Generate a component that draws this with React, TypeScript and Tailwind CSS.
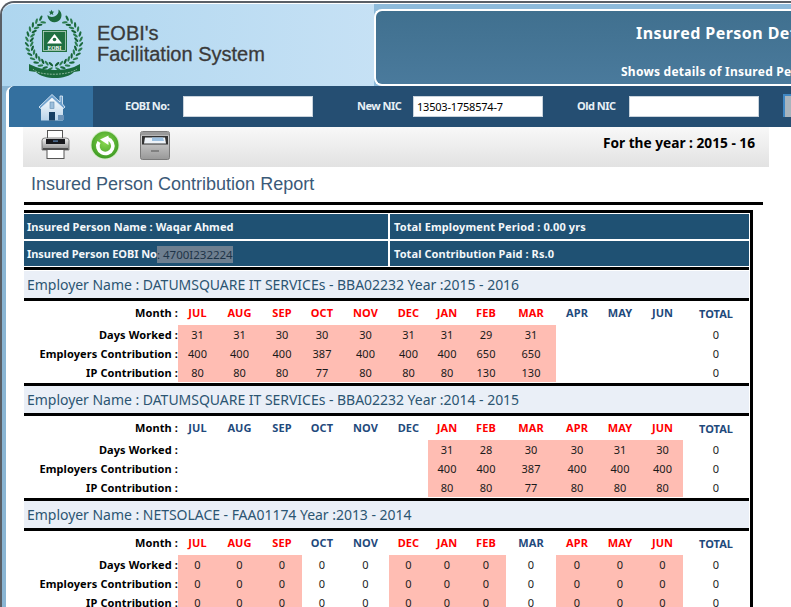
import React from "react";

const MONTHS = ["JUL","AUG","SEP","OCT","NOV","DEC","JAN","FEB","MAR","APR","MAY","JUN"];
const GRID = "grid grid-cols-[154px_39px_45px_40px_40px_47px_39px_38px_40px_50px_42px_44px_41px_66px]";

type Sec = { title: string; on: boolean[]; days: string[]; emp: string[]; ip: string[] };
const e = "";
const SECTIONS: Sec[] = [
  {
    title: "Employer Name : DATUMSQUARE IT SERVICEs - BBA02232 Year :2015 - 2016",
    on: [1,1,1,1,1,1,1,1,1,0,0,0].map(Boolean),
    days: ["31","31","30","30","30","31","31","29","31",e,e,e],
    emp: ["400","400","400","387","400","400","400","650","650",e,e,e],
    ip: ["80","80","80","77","80","80","80","130","130",e,e,e],
  },
  {
    title: "Employer Name : DATUMSQUARE IT SERVICEs - BBA02232 Year :2014 - 2015",
    on: [0,0,0,0,0,0,1,1,1,1,1,1].map(Boolean),
    days: [e,e,e,e,e,e,"31","28","30","30","31","30"],
    emp: [e,e,e,e,e,e,"400","400","387","400","400","400"],
    ip: [e,e,e,e,e,e,"80","80","77","80","80","80"],
  },
  {
    title: "Employer Name : NETSOLACE - FAA01174 Year :2013 - 2014",
    on: [1,1,1,0,0,1,1,1,0,1,1,1].map(Boolean),
    days: Array(12).fill("0"),
    emp: Array(12).fill("0"),
    ip: Array(12).fill("0"),
  },
];

function Emblem() {
  const leaves: React.ReactNode[] = [];
  const cx = 30;
  const cy = 33;
  for (let side = -1; side <= 1; side += 2) {
    for (let i = 0; i < 14; i++) {
      const deg = 82 - i * 11;
      const a = (deg * Math.PI) / 180;
      for (const [dr, tilt, fill] of [
        [3.2, 35, i % 2 ? "#1b6a3e" : "#2c7d50"],
        [-1.6, -35, i % 2 ? "#2c7d50" : "#145f34"],
      ] as [number, number, string][]) {
        const x = cx + side * (24 + dr) * Math.cos(a);
        const y = cy + (24 + dr) * Math.sin(a);
        const rot = side * (deg + 90 + tilt);
        leaves.push(
          <ellipse key={`${side}-${i}-${dr}`} cx={x} cy={y} rx={2.9} ry={1.15} fill={fill} transform={`rotate(${rot} ${x} ${y})`} />
        );
      }
      if (i % 2 === 0) {
        const x = cx + side * 25 * Math.cos(a);
        const y = cy + 25 * Math.sin(a);
        leaves.push(<circle key={`c${side}-${i}`} cx={x} cy={y} r={0.7} fill="#a8cdb6" />);
      }
    }
  }
  return (
    <svg width="62" height="74" viewBox="0 0 62 74" className="shrink-0">
      <path d="M23.500 6A7 7 0 1 0 34.500 0.500A6.500 6.500 0 0 1 23.500 6z" fill="#1c6b3f" />
      <path d="M27.500 0.800l0.800 1.800 2 0.200-1.500 1.300 0.500 2-1.800-1-1.800 1 0.500-2-1.500-1.300 2-0.200z" fill="#1c6b3f" />
      {leaves}
      <rect x="18" y="21" width="25" height="22" fill="#1f6f41" />
      <rect x="19.500" y="22.500" width="22" height="19" fill="none" stroke="#cfe3d6" strokeWidth="0.7" />
      <path d="M30.500 25L38 34.500H23z" fill="#fff" />
      <circle cx="30.500" cy="30.500" r="1.800" fill="#1f6f41" />
      <text x="30.500" y="40.500" textAnchor="middle" fontSize="5.500" fontWeight="700" fill="#fff" fontFamily="Liberation Serif, serif">EOBI</text>
      <path d="M5 55l7 3c10 4 28 4 38 0l6-3v7l-6 1c-8 8-30 8-38 0l-7-1z" fill="#1a6a3d" />
      <path d="M9 60c4 7 36 7 44 0" stroke="#b9d6c4" strokeWidth="0.7" fill="none" strokeDasharray="2 1" />
    </svg>
  );
}

function HomeIcon() {
  return (
    <svg width="28" height="30" viewBox="0 0 28 30">
      <defs>
        <linearGradient id="hw" x1="0" y1="0" x2="0" y2="1">
          <stop offset="0" stopColor="#ffffff" />
          <stop offset="1" stopColor="#b9d4ea" />
        </linearGradient>
      </defs>
      <path d="M3 14v14.500h22V14L14 4z" fill="url(#hw)" />
      <path d="M1 15L14 2.500 22 10V4h2.500v8L27 15l-1.500 1.500L14 6 2.500 16.500z" fill="#6ea0cc" stroke="#eaf3fb" strokeWidth="0.8" />
      <rect x="12" y="10" width="4" height="6.500" fill="#9dbfdc" stroke="#5f89ad" strokeWidth="0.6" />
      <rect x="11" y="20" width="6" height="8.500" fill="#173f63" />
      <rect x="20" y="23" width="6" height="5" fill="#6c93b8" />
    </svg>
  );
}

function PrinterIcon() {
  return (
    <svg width="29" height="29" viewBox="0 0 29 29">
      <defs>
        <linearGradient id="pb" x1="0" y1="0" x2="0" y2="1">
          <stop offset="0" stopColor="#f4f4f4" />
          <stop offset="1" stopColor="#8c8c8c" />
        </linearGradient>
      </defs>
      <rect x="6.500" y="0.500" width="15" height="8" fill="#fdfdfd" stroke="#555" />
      <path d="M1 10.500Q1 8 4 8h21q3 0 3 2.500V20H1z" fill="url(#pb)" stroke="#555" strokeWidth="0.7" />
      <rect x="5" y="9" width="19" height="5" fill="#17181c" />
      <rect x="12" y="10.500" width="5" height="1.200" fill="#5f87b5" />
      <rect x="6" y="19" width="17" height="9.500" fill="#fff" stroke="#555" />
      <rect x="2" y="18" width="25" height="2" fill="#4d4d4d" />
    </svg>
  );
}

function RefreshIcon() {
  return (
    <svg width="30" height="30" viewBox="0 0 30 30">
      <defs>
        <radialGradient id="rg" cx="0.500" cy="0.400" r="0.650">
          <stop offset="0" stopColor="#8ad84f" />
          <stop offset="1" stopColor="#37951f" />
        </radialGradient>
      </defs>
      <circle cx="15" cy="15" r="14.500" fill="#d6ecc9" />
      <circle cx="15" cy="15" r="13.500" fill="url(#rg)" />
      <path d="M17.500 8.800A7.500 7.500 0 1 1 9 12" fill="none" stroke="#fff" strokeWidth="3.600" />
      <path d="M18.500 5.500v9.500L10 9.500z" fill="#fff" />
    </svg>
  );
}

function ScannerIcon() {
  return (
    <svg width="30" height="29" viewBox="0 0 30 29">
      <defs>
        <linearGradient id="sb" x1="0" y1="0" x2="0" y2="1">
          <stop offset="0" stopColor="#e2e2e2" />
          <stop offset="1" stopColor="#989898" />
        </linearGradient>
      </defs>
      <rect x="0.500" y="0.500" width="29" height="28" rx="2" fill="url(#sb)" stroke="#7a7a7a" />
      <rect x="1" y="1" width="28" height="3.500" fill="#9a9a9a" />
      <rect x="2" y="5" width="26" height="8.500" fill="#333" />
      <path d="M5 6.500h20l1 6H4z" fill="#eef3f8" />
      <path d="M12 6.500h11l1 3.500H12z" fill="#9cc0e0" />
      <rect x="11" y="19" width="8" height="2" fill="#808080" />
    </svg>
  );
}

function Cell({ children, on }: { children?: React.ReactNode; on?: boolean }) {
  return <div className={`flex items-center justify-center text-[#1a1a1a] ${on ? "bg-[#ffbdb3]" : "bg-white"}`}>{children}</div>;
}

function DataRow({ label, vals, on }: { label: string; vals: string[]; on: boolean[] }) {
  return (
    <div className={`${GRID} h-[19px] text-[11px] leading-[19px]`}>
      <div className="text-right font-bold tracking-[0.1px] text-black">{label}</div>
      {vals.map((v, i) => (
        <Cell key={i} on={on[i]}>{v}</Cell>
      ))}
      <Cell>0</Cell>
    </div>
  );
}

function Section({ s, divider }: { s: Sec; divider: boolean }) {
  return (
    <section className={divider ? "border-b-[3px] border-black" : ""}>
      <div className="flex h-[27px] items-center bg-[#eaeff7] pl-[3px] text-[14px] tracking-[-0.03px] text-[#2c5572]">{s.title}</div>
      <div className="h-[3px] bg-black" />
      <div className={`${GRID} h-[24px] items-center text-[11px] font-bold`}>
        <div className="text-right tracking-[0.1px] text-black">Month :</div>
        {MONTHS.map((m, i) => (
          <div key={m} className={`text-center tracking-[0.1px] ${s.on[i] ? "text-[#ff0000]" : "text-[#1f4a7c]"}`}>{m}</div>
        ))}
        <div className="pt-[2px] text-center text-[#1f4a7c]">TOTAL</div>
      </div>
      <DataRow label="Days Worked :" vals={s.days} on={s.on} />
      <DataRow label="Employers Contribution :" vals={s.emp} on={s.on} />
      <DataRow label="IP Contribution :" vals={s.ip} on={s.on} />
      <div className="h-px" />
    </section>
  );
}

export default function App() {
  return (
    <div className="h-[607px] w-[791px] overflow-hidden bg-white pt-px font-['Noto_Sans',sans-serif]">
      <div className="h-[620px] rounded-tl-[14px] border-t-2 border-l-2 border-[#5a5f66] bg-[#8ab5d3]">
        <header className="flex h-[83px] rounded-tl-[12px] border-t border-white bg-gradient-to-r from-[#aed6ef] to-[#e0edfb]">
          <div className="flex w-[372px] shrink-0 items-start pt-[5px] pl-[22px]">
            <Emblem />
            <div className="ml-[11px] mt-[14px] font-['Liberation_Sans',sans-serif] text-[20px] leading-[21px] text-[#3a3a3a] [-webkit-text-stroke:0.3px_#3a3a3a]">
              <div>EOBI's</div>
              <div>Facilitation System</div>
            </div>
          </div>
          <div className="flex-1 bg-[#8ebbdb] pt-[5px]">
            <div className="h-[77px] overflow-hidden rounded-l-[8px] border-2 border-r-0 border-white bg-gradient-to-b from-[#40708f] to-[#4a7a9c] font-bold text-white">
              <div className="ml-[260px] w-[300px] pt-[12px] text-[16px] leading-[20px] tracking-[0.45px]">Insured Person Details</div>
              <div className="ml-[245px] w-[300px] pt-[21px] text-[12px] leading-[16px] tracking-[0.25px]">Shows details of Insured Person</div>
            </div>
          </div>
        </header>
        <main className="ml-[4px] rounded-tl-[8px] bg-white">
          <nav className="ml-[3px] flex h-[41px] items-center overflow-hidden rounded-tl-[6px] bg-[#254e72] text-[11px] font-bold tracking-[-0.5px] text-[#e8f0f6]">
            <div className="flex h-full w-[84px] shrink-0 items-center justify-center bg-[#34709f] pl-[2px]">
              <HomeIcon />
            </div>
            <span className="ml-[32px] w-[58px] shrink-0">EOBI No:</span>
            <input readOnly className="h-[21px] w-[130px] shrink-0 border border-[#c9d3dc] bg-white" />
            <span className="ml-[44px] w-[56px] shrink-0">New NIC</span>
            <input readOnly value="13503-1758574-7" className="h-[21px] w-[130px] shrink-0 border border-[#c9d3dc] bg-white px-[3px] text-[11px] font-normal tracking-[-0.2px] text-black" />
            <span className="ml-[34px] w-[52px] shrink-0">Old NIC</span>
            <input readOnly className="h-[21px] w-[130px] shrink-0 border border-[#c9d3dc] bg-white" />
            <div className="-mt-[2px] ml-[24px] h-[23px] w-[20px] shrink-0 border-t-2 border-l-2 border-[#3f87c4] bg-[#a8b4bd]" />
          </nav>
          <div className="ml-[17px] flex h-[40px] w-[746px] items-start bg-gradient-to-b from-[#f8f8f8] to-[#e2e2e2]">
            <div className="ml-[18px] mt-[3px]"><PrinterIcon /></div>
            <div className="ml-[20px] mt-[3px]"><RefreshIcon /></div>
            <div className="ml-[20px] mt-[4px]"><ScannerIcon /></div>
            <div className="ml-auto mr-[14px] mt-[6px] text-[13.700px] leading-[20px] font-bold text-black">For the year : 2015 - 16</div>
          </div>
          <h1 className="ml-[25px] mt-[6px] h-[23px] font-['Liberation_Sans',sans-serif] text-[18px] leading-[23px] text-[#3b5a78]">Insured Person Contribution Report</h1>
          <div className="ml-[18px] mt-[6px] h-[3px] w-[739px] bg-black" />
          <div className="ml-[18px] mt-[5px] w-[729px] border-t-[3px] border-r-[3px] border-black">
            <div className="mr-px pt-px">
              <div className="grid grid-cols-[364px_359px] gap-[2px] text-[11px] font-bold text-[#f3f7fa]">
                <div className="flex h-[25px] items-center bg-[#1f5173] pl-[3px] pt-px tracking-[0.05px]">Insured Person Name : Waqar Ahmed</div>
                <div className="flex h-[25px] items-center bg-[#1f5173] pl-[4px] pt-px tracking-[0.12px]">Total Employment Period : 0.00 yrs</div>
                <div className="flex h-[25px] items-center bg-[#1f5173] pl-[3px] pt-px">
                  <span className="tracking-[-0.05px]">Insured Person EOBI No</span>
                  <span className="bg-[#6e7f90] text-[11.500px] font-normal leading-[17px] text-[#1e3448]"> : 4700I232224</span>
                </div>
                <div className="flex h-[25px] items-center bg-[#1f5173] pl-[4px] pt-px tracking-[0.08px]">Total Contribution Paid : Rs.0</div>
              </div>
              <div className="mt-[1px] h-[4px] border-t-[3px] border-black" />
              <div>
                {SECTIONS.map((s, i) => (
                  <Section key={i} s={s} divider={i < 2} />
                ))}
              </div>
            </div>
          </div>
        </main>
      </div>
    </div>
  );
}
